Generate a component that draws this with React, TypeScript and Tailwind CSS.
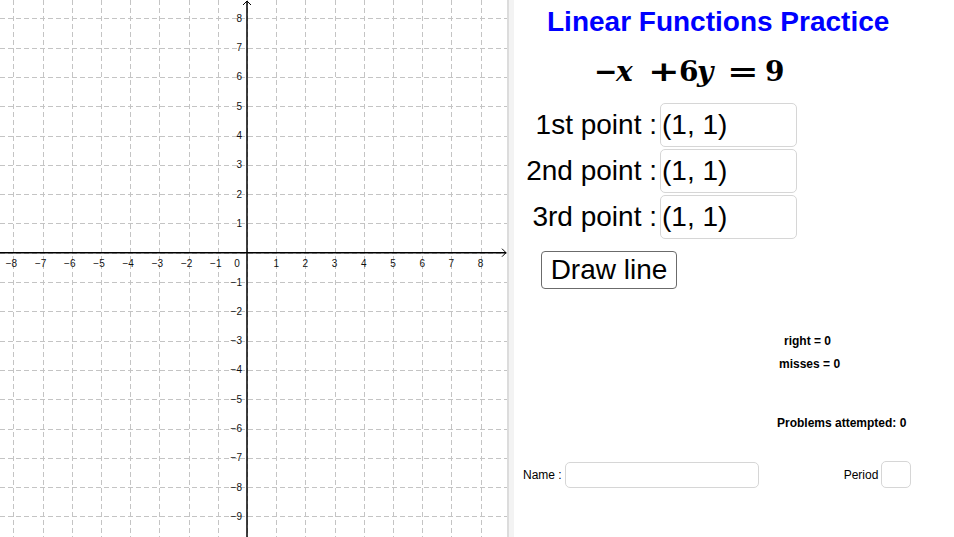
import React from 'react';

const OX = 247;
const OY = 252.7;
const UX = 29.2;
const UY = 29.3;

const xs = Array.from({ length: 17 }, (_, i) => i - 8);
const ys = Array.from({ length: 18 }, (_, i) => i - 9);

const fmt = (n: number) => (n < 0 ? `\u2212${-n}` : `${n}`);

function Graph() {
    return (
        <svg width={507} height={537} className="block" style={{ fontFamily: '"Liberation Sans", Arial, sans-serif' }}>
            {/* grid */}
            <g stroke="#c4c4c4" strokeWidth={1} strokeDasharray="5 3">
                {xs.map((k) => (
                    <line key={`vx${k}`} x1={Math.round(OX + k * UX) + 0.5} y1={0} x2={Math.round(OX + k * UX) + 0.5} y2={537} />
                ))}
                {ys.map((k) => (
                    <line key={`hy${k}`} x1={0} y1={Math.round(OY - k * UY) + 0.5} x2={507} y2={Math.round(OY - k * UY) + 0.5} />
                ))}
            </g>

            {/* axes */}
            <g stroke="#000" strokeWidth={1.5} fill="none">
                <line x1={0} y1={OY} x2={506} y2={OY} />
                <line x1={OX} y1={537} x2={OX} y2={1} />
                <polyline points={`${502},${OY - 4} ${506},${OY} ${502},${OY + 4}`} strokeWidth={1} />
                <polyline points={`${OX - 4},${5} ${OX},${1} ${OX + 4},${5}`} strokeWidth={1} />
            </g>

            {/* x labels */}
            <g fontSize={10} fill="#111" textAnchor="middle">
                {xs.filter((k) => k !== 0).map((k) => (
                    <text key={`lx${k}`} x={OX + k * UX - (k < 0 ? 2 : 0)} y={OY + 14}>
                        {fmt(k)}
                    </text>
                ))}
                <text x={OX - 10} y={OY + 14}>0</text>
            </g>

            {/* y labels */}
            <g fontSize={10} fill="#111" textAnchor="end">
                {ys.filter((k) => k !== 0).map((k) => (
                    <text key={`ly${k}`} x={OX - 5} y={OY - k * UY + 3.5}>
                        {fmt(k)}
                    </text>
                ))}
            </g>
        </svg>
    );
}

function PointRow({ label }: { label: string }) {
    return (
        <div className="flex items-center h-[44px]">
            <span className="w-[143px] text-right text-[28px] leading-none text-black">{label}</span>
            <div className="ml-[3px] w-[137px] h-[44px] border border-[#d6d6d6] rounded-[5px] flex items-center pl-[1px] text-[28px] leading-none text-black">
                (1, 1)
            </div>
        </div>
    );
}

export default function App() {
    return (
        <div className="w-[954px] h-[537px] flex bg-white overflow-hidden" style={{ fontFamily: '"Liberation Sans", Arial, sans-serif' }}>
            <div className="w-[507px] h-full shrink-0">
                <Graph />
            </div>
            <div className="w-[7px] h-full shrink-0 border-l-2 border-[#dcdcdc] bg-[#f3f3f3]" />

            {/* right panel */}
            <div className="flex-1 flex flex-col">
                <div className="mt-[7px] pl-[33px] h-[30px] leading-[30px] text-[28px] font-bold text-[#0000ff] whitespace-nowrap">
                    Linear Functions Practice
                </div>

                {/* -x + 6y = 9 */}
                <div
                    className="mt-[19px] pl-[80px] h-[32px] leading-[32px] flex items-center text-[28px] font-bold text-black whitespace-nowrap"
                    style={{ fontFamily: '"DejaVu Serif", "Liberation Serif", serif' }}
                >
                    <span className="w-[22px] shrink-0">−</span>
                    <span className="w-[32px] shrink-0 italic">x</span>
                    <span className="w-[31px] shrink-0"><span className="inline-block origin-left scale-x-[1.35]">+</span></span>
                    <span className="w-[18px] shrink-0">6</span>
                    <span className="w-[30px] shrink-0 italic">y</span>
                    <span className="w-[38px] shrink-0"><span className="inline-block origin-left scale-x-[1.35]">=</span></span>
                    <span className="shrink-0">9</span>
                </div>

                <div className="mt-[15px] flex flex-col gap-[2px]">
                    <PointRow label="1st point :" />
                    <PointRow label="2nd point :" />
                    <PointRow label="3rd point :" />
                </div>

                <div className="mt-[12px] pl-[27px]">
                    <button className="w-[136px] h-[38px] border border-[#6b6b6b] rounded-[4px] bg-white text-[28px] leading-none text-black">
                        Draw line
                    </button>
                </div>

                <div className="mt-[46px] pl-[270px] h-[12px] leading-[12px] text-[12px] font-bold text-black">right = 0</div>
                <div className="mt-[11px] pl-[265px] h-[12px] leading-[12px] text-[12px] font-bold text-black">misses = 0</div>
                <div className="mt-[47px] pl-[263px] h-[12px] leading-[12px] text-[12px] font-bold text-black">Problems attempted: 0</div>

                <div className="mt-[32px] pl-[9px] flex items-center text-[12px] text-black">
                    <span>Name :</span>
                    <div className="ml-[3px] w-[194px] h-[26px] border border-[#d6d6d6] rounded-[5px]" />
                    <span className="ml-[85px]">Period</span>
                    <div className="ml-[3px] w-[30px] h-[27px] border border-[#d6d6d6] rounded-[5px]" />
                </div>
            </div>
        </div>
    );
}
